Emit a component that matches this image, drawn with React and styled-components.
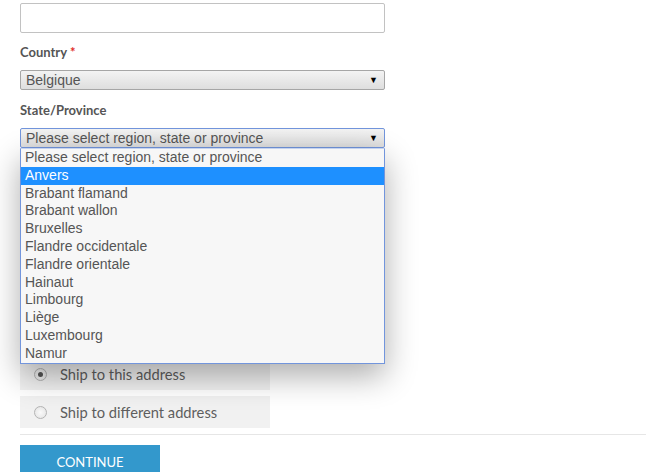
import React from 'react';
import styled, { createGlobalStyle } from 'styled-components';

const Global = createGlobalStyle`
  body {
    margin: 0;
    background: #fff;
    font-family: Lato, "Open Sans", sans-serif;
  }
`;

const Page = styled.div`
  position: relative;
  width: 646px;
  height: 472px;
  overflow: hidden;
  padding-top: 3px;
  box-sizing: border-box;
`;

const Field = styled.div`
  padding-left: 20px;
  width: 365px;
  margin-bottom: ${(p) => p.$mb || 0}px;
`;

const TextInput = styled.div`
  height: 30px;
  box-sizing: border-box;
  border: 1px solid #c2c2c2;
  border-radius: 2px;
  background: #fff;
`;

const Label = styled.div`
  font-size: 13px;
  font-weight: 700;
  color: #555;
  line-height: 16px;
  margin-bottom: 10px;
`;

const Star = styled.span`
  color: #e02b27;
  margin-left: 3px;
`;

const Select = styled.div`
  height: 20px;
  box-sizing: border-box;
  border: 1px solid ${(p) => (p.$focus ? '#7295dc' : '#a6a6a6')};
  border-radius: 2px;
  background: linear-gradient(#f3f3f3, #dedede);
  font-family: "Liberation Sans", Arial, sans-serif;
  font-size: 14px;
  color: #555;
  line-height: 18px;
  padding: 0 6px 0 5px;
  display: flex;
  align-items: center;
  justify-content: space-between;
`;

const Arrow = styled.span`
  font-size: 9px;
  color: #000;
`;

const Menu = styled.div`
  position: absolute;
  left: 20px;
  top: 148px;
  width: 365px;
  box-sizing: border-box;
  border: 1px solid #7295dc;
  border-top-color: #c5d3ef;
  background: #f7f7f7;
  box-shadow: 0 12px 30px rgba(0, 0, 0, 0.32);
  font-family: "Liberation Sans", Arial, sans-serif;
  font-size: 14px;
  z-index: 5;
`;

const Option = styled.div`
  height: 17.8px;
  line-height: 17.8px;
  padding-left: 4px;
  color: ${(p) => (p.$active ? '#fff' : '#555')};
  background: ${(p) => (p.$active ? '#1e90ff' : 'transparent')};
`;

const Hidden = styled.div`
  height: 210px;
`;

const Choice = styled.label`
  display: flex;
  align-items: center;
  width: 250px;
  height: 32px;
  margin-left: 20px;
  margin-bottom: 6px;
  background: #f1f1f1;
  font-size: 14.7px;
  color: #5e5e5e;
`;

const Radio = styled.span`
  width: 11px;
  height: 11px;
  border-radius: 50%;
  border: 1px solid #b4b4b4;
  background: radial-gradient(circle, #fafafa, #e2e2e2);
  margin: 0 13px 0 14px;
  display: flex;
  align-items: center;
  justify-content: center;
  box-sizing: content-box;
  &::after {
    content: '';
    width: 5px;
    height: 5px;
    border-radius: 50%;
    background: ${(p) => (p.$checked ? '#555' : 'transparent')};
  }
`;

const Rule = styled.hr`
  margin: 0 0 10px 20px;
  border: 0;
  border-top: 1px solid #e6e6e6;
`;

const Continue = styled.button`
  margin-left: 20px;
  width: 140px;
  height: 32px;
  border: 0;
  background: #3398cc;
  color: #fff;
  font-family: Lato, sans-serif;
  font-size: 13px;
  text-transform: uppercase;
  padding-top: 2px;
`;

const regions = [
  'Please select region, state or province',
  'Anvers',
  'Brabant flamand',
  'Brabant wallon',
  'Bruxelles',
  'Flandre occidentale',
  'Flandre orientale',
  'Hainaut',
  'Limbourg',
  'Liège',
  'Luxembourg',
  'Namur',
];

export default function App() {
  return (
    <Page>
      <Global />
      <Field $mb={11}>
        <TextInput />
      </Field>
      <Field $mb={12}>
        <Label>
          Country<Star>*</Star>
        </Label>
        <Select>
          Belgique<Arrow>▼</Arrow>
        </Select>
      </Field>
      <Field>
        <Label>State/Province</Label>
        <Select $focus>
          Please select region, state or province<Arrow>▼</Arrow>
        </Select>
      </Field>
      <Menu>
        {regions.map((r, i) => (
          <Option key={r} $active={i === 1}>
            {r}
          </Option>
        ))}
      </Menu>
      <Hidden />
      <Choice>
        <Radio $checked />
        Ship to this address
      </Choice>
      <Choice>
        <Radio />
        Ship to different address
      </Choice>
      <Rule />
      <Continue>Continue</Continue>
    </Page>
  );
}
